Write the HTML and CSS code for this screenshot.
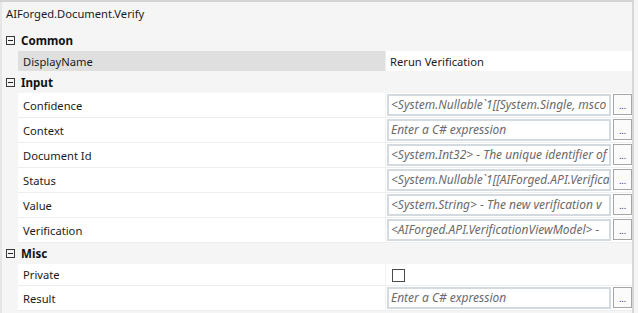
FILE: index.html
```html
<!DOCTYPE html>
<html>
<head>
<meta charset="utf-8">
<link rel="stylesheet" href="styles.css">
</head>
<body>
<div class="panel">
  <div class="inner">
    <div class="title">AIForged.Document.Verify</div>

    <div class="cat cat-common"><span class="toggle"></span><span class="cat-label">Common</span></div>
    <div class="row row-display">
      <div class="name name-selected">DisplayName</div>
      <div class="value value-plain">Rerun Verification</div>
    </div>

    <div class="cat cat-input"><span class="toggle"></span><span class="cat-label">Input</span></div>
    <div class="row">
      <div class="name">Confidence</div>
      <div class="value"><div class="box">&lt;System.Nullable`1[[System.Single, msco</div><div class="btn">...</div></div>
    </div>
    <div class="row">
      <div class="name">Context</div>
      <div class="value"><div class="box">Enter a C# expression</div><div class="btn">...</div></div>
    </div>
    <div class="row">
      <div class="name">Document Id</div>
      <div class="value"><div class="box">&lt;System.Int32&gt; - The unique identifier of</div><div class="btn">...</div></div>
    </div>
    <div class="row">
      <div class="name">Status</div>
      <div class="value"><div class="box">&lt;System.Nullable`1[[AIForged.API.Verifica</div><div class="btn">...</div></div>
    </div>
    <div class="row">
      <div class="name">Value</div>
      <div class="value"><div class="box">&lt;System.String&gt; - The new verification v</div><div class="btn">...</div></div>
    </div>
    <div class="row">
      <div class="name">Verification</div>
      <div class="value"><div class="box">&lt;AIForged.API.VerificationViewModel&gt; -</div><div class="btn">...</div></div>
    </div>

    <div class="cat cat-misc"><span class="toggle"></span><span class="cat-label">Misc</span></div>
    <div class="row row-check">
      <div class="name">Private</div>
      <div class="value"><span class="check"></span></div>
    </div>
    <div class="row">
      <div class="name">Result</div>
      <div class="value"><div class="box">Enter a C# expression</div><div class="btn">...</div></div>
    </div>
  </div>
</div>
</body>
</html>
```

FILE: styles.css
```css
html, body {
  margin: 0;
  padding: 0;
  background: #f5f5f5;
}
body {
  width: 638px;
  height: 313px;
  overflow: hidden;
  font-family: "Noto Sans", "Open Sans", sans-serif;
  font-size: 11.2px;
  color: #1b1b1b;
}
.panel {
  width: 634px;
  height: 311px;
  border-top: 2px solid #d4d4d4;
  display: flex;
}
.inner {
  width: 630px;
  border-left: 2px solid #e6e6e6;
  border-right: 2px solid #d8d8d8;
  display: flex;
  flex-direction: column;
  background: #f5f5f5;
}
.title {
  height: 28px;
  line-height: 24px;
  padding-left: 4px;
  white-space: nowrap;
}
.cat {
  height: 21px;
  display: flex;
  align-items: center;
  padding-left: 4px;
}
.cat-input { height: 22px; }
.toggle {
  width: 7px;
  height: 7px;
  border: 1px solid #3a3a3a;
  position: relative;
  margin-right: 6px;
  flex: none;
}
.toggle::after {
  content: "";
  position: absolute;
  left: 1px;
  top: 3px;
  width: 5px;
  height: 1px;
  background: #222;
}
.cat-label {
  font-weight: bold;
  color: #111;
  font-size: 11.6px;
}
.row {
  display: flex;
  margin-left: 16px;
  height: 24px;
  border-bottom: 1px solid #eeeeee;
  background: #ffffff;
}
.row-display {
  height: 20px;
  border-bottom: none;
}
.row-check {
  height: 21px;
}
.name {
  width: 362px;
  padding-left: 5px;
  display: flex;
  align-items: center;
  white-space: nowrap;
  border-right: 1px solid #f2f2f2;
}
.name-selected {
  background: #dfdfdf;
  border-right: 1px solid #ececec;
}
.value {
  flex: 1;
  display: flex;
  align-items: flex-start;
  padding-top: 1px;
  padding-left: 1px;
  min-width: 0;
}
.value-plain {
  padding-top: 0;
  padding-left: 4px;
  align-items: center;
  white-space: nowrap;
}
.box {
  width: 217px;
  height: 18px;
  border: 2px solid #d3dae0;
  padding: 0 2px;
  line-height: 18px;
  font-size: 12px;
  font-style: italic;
  color: #6a6a6a;
  white-space: nowrap;
  overflow: hidden;
  background: #fff;
}
.btn {
  width: 17px;
  height: 19px;
  margin-left: 2px;
  border: 1px solid #a6a6a6;
  background: #fbfbfb;
  color: #2a2a6a;
  font-size: 9px;
  line-height: 22px;
  text-align: center;
  overflow: hidden;
}
.row-check .value {
  padding-top: 5px;
  padding-left: 6px;
}
.check {
  width: 11px;
  height: 11px;
  border: 1px solid #4a4a4a;
  background: #fff;
}
```
